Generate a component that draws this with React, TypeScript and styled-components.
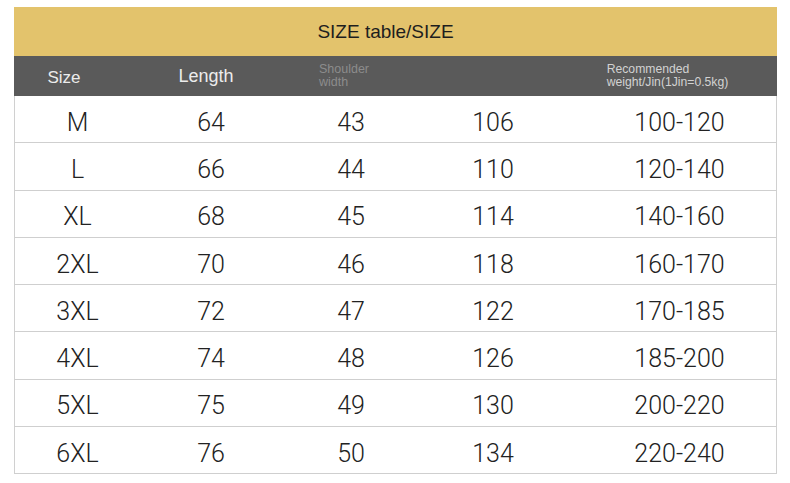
import React from 'react';
import styled, { createGlobalStyle } from 'styled-components';

const GlobalStyle = createGlobalStyle`
  html, body {
    margin: 0;
    padding: 0;
    background: #ffffff;
  }
  body {
    font-family: 'Liberation Sans', Arial, sans-serif;
  }
`;

interface SizeRow {
  size: string;
  length: number;
  shoulder: number;
  chest: number;
  weight: string;
}

const rows: SizeRow[] = [
  { size: 'M', length: 64, shoulder: 43, chest: 106, weight: '100-120' },
  { size: 'L', length: 66, shoulder: 44, chest: 110, weight: '120-140' },
  { size: 'XL', length: 68, shoulder: 45, chest: 114, weight: '140-160' },
  { size: '2XL', length: 70, shoulder: 46, chest: 118, weight: '160-170' },
  { size: '3XL', length: 72, shoulder: 47, chest: 122, weight: '170-185' },
  { size: '4XL', length: 74, shoulder: 48, chest: 126, weight: '185-200' },
  { size: '5XL', length: 75, shoulder: 49, chest: 130, weight: '200-220' },
  { size: '6XL', length: 76, shoulder: 50, chest: 134, weight: '220-240' },
];

function App() {
  return (
    <Page>
      <GlobalStyle />
      <Table>
        <Banner>SIZE table/SIZE</Banner>
        <HeadRow>
          <HeadCell $size={17} $color="#ececec" $nudge={3} $shift={-26}>
            Size
          </HeadCell>
          <HeadCell $size={18} $color="#ececec" $shift={-8}>
            Length
          </HeadCell>
          <HeadCell $size={12.5} $color="#8c8c8c" $block $shift={-12}>
            <span>
              Shoulder
              <br />
              width
            </span>
          </HeadCell>
          <HeadCell $size={12.5} $color="#8c8c8c" />
          <HeadCell $size={12.2} $color="#d2d2d2" $block $shift={-6}>
            <span>
              Recommended
              <br />
              weight/Jin(1Jin=0.5kg)
            </span>
          </HeadCell>
        </HeadRow>
        {rows.map((row) => (
          <Row key={row.size}>
            <Cell>{row.size}</Cell>
            <Cell>{row.length}</Cell>
            <Cell>{row.shoulder}</Cell>
            <Cell>{row.chest}</Cell>
            <Cell $pad={18}>{row.weight}</Cell>
          </Row>
        ))}
      </Table>
    </Page>
  );
}

const Page = styled.div`
  width: 790px;
  height: 483px;
  padding: 7px 0 0 14px;
  box-sizing: border-box;
`;

const Table = styled.div`
  width: 763px;
  display: flex;
  flex-direction: column;
`;

const Banner = styled.div`
  height: 49px;
  background-color: #e3c36c;
  display: flex;
  align-items: center;
  justify-content: center;
  padding-right: 20px;
  font-size: 19px;
  color: #1e1e1e;
  box-sizing: border-box;
`;

const columns = '126px 140px 140px 144px 1fr';

const HeadRow = styled.div`
  height: 40px;
  display: grid;
  grid-template-columns: ${columns};
  background-color: #5a5a5a;
`;

// $shift moves the label off the column centre (positive = right)
const HeadCell = styled.div<{
  $size: number;
  $color: string;
  $nudge?: number;
  $block?: boolean;
  $shift?: number;
}>`
  display: flex;
  align-items: center;
  justify-content: center;
  padding-left: ${(p) => Math.max(p.$shift ?? 0, 0)}px;
  padding-right: ${(p) => Math.max(-(p.$shift ?? 0), 0)}px;
  padding-top: ${(p) => p.$nudge ?? 0}px;
  font-size: ${(p) => p.$size}px;
  line-height: ${(p) => (p.$block ? '1.08' : '1')};
  color: ${(p) => p.$color};
  white-space: nowrap;
`;

const Row = styled.div`
  height: 47.3px;
  box-sizing: border-box;
  display: grid;
  grid-template-columns: ${columns};
  border-left: 1px solid #d0d0d0;
  border-right: 1px solid #d0d0d0;
  border-bottom: 1.3px solid #cfcfcf;
`;

const Cell = styled.div<{ $pad?: number }>`
  display: flex;
  align-items: center;
  justify-content: center;
  padding-left: ${(p) => p.$pad ?? 0}px;
  padding-top: 6px;
  font-family: Roboto, 'Noto Sans CJK SC', sans-serif;
  font-weight: 300;
  font-size: 25px;
  color: #222222;
  &:first-child {
    margin-left: -1px;
  }
`;

export default App;
